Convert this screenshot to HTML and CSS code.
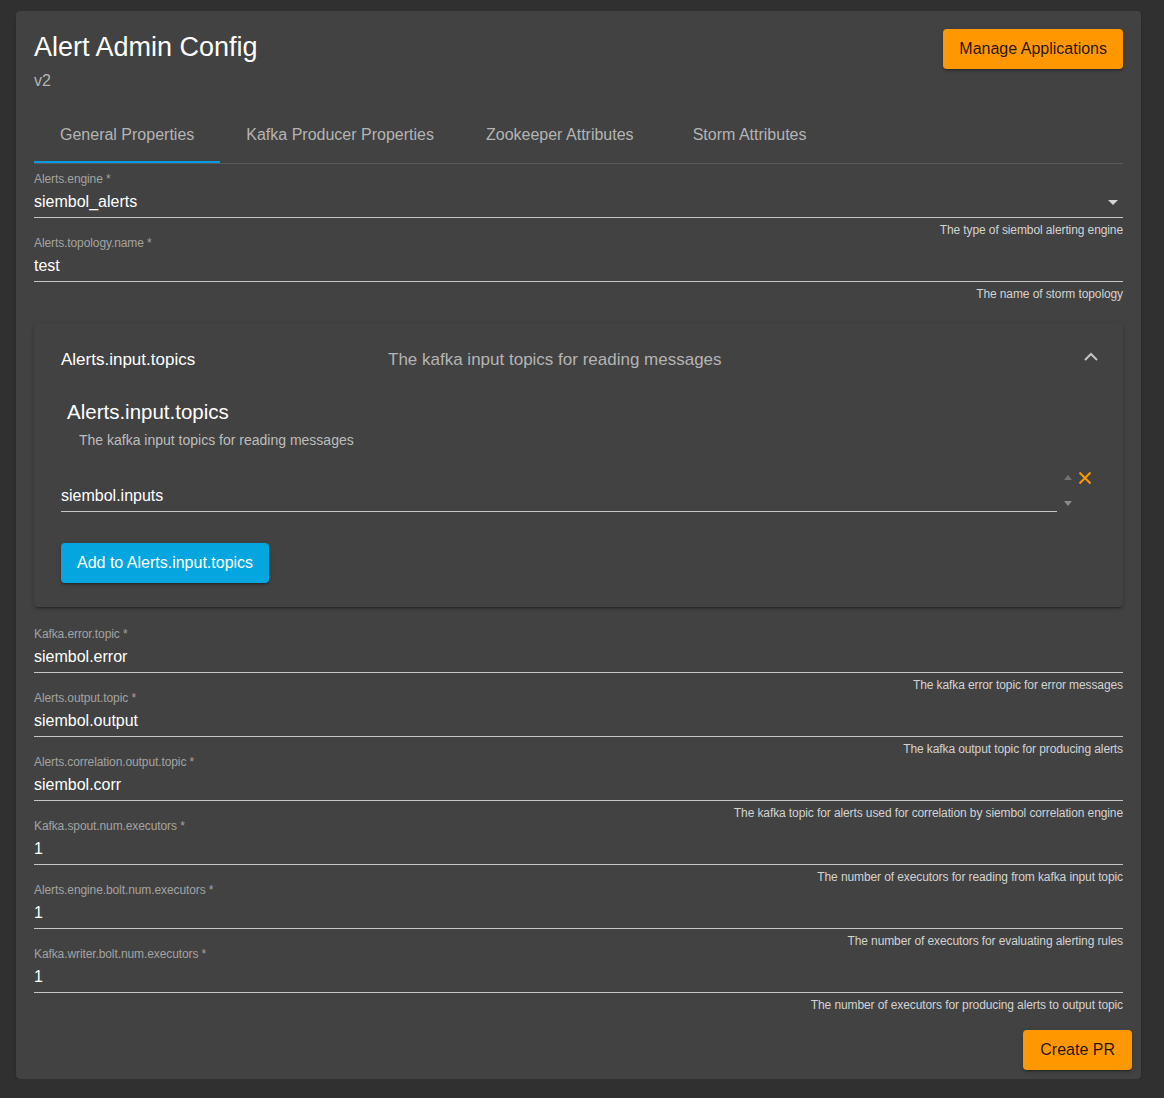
FILE: index.html
```html
<!DOCTYPE html>
<html lang="en">
<head>
<meta charset="utf-8">
<title>Alert Admin Config</title>
<link rel="stylesheet" href="styles.css">
</head>
<body>
<div class="card">
  <div class="card-header">
    <div class="heading">
      <div class="title">Alert Admin Config</div>
      <div class="subtitle">v2</div>
    </div>
    <button class="btn btn-orange">Manage Applications</button>
  </div>

  <div class="tabs">
    <div class="tab active">General Properties</div>
    <div class="tab">Kafka Producer Properties</div>
    <div class="tab">Zookeeper Attributes</div>
    <div class="tab">Storm Attributes</div>
  </div>

  <div class="form">
    <div class="field field-first">
      <div class="field-label">Alerts.engine *</div>
      <div class="field-control">
        <span class="field-value">siembol_alerts</span>
        <svg class="select-arrow" width="10" height="5" viewBox="0 0 10 5"><path d="M0 0 L10 0 L5 5 Z" fill="#d4d4d4"/></svg>
      </div>
      <div class="field-hint">The type of siembol alerting engine</div>
    </div>
    <div class="field">
      <div class="field-label">Alerts.topology.name *</div>
      <div class="field-control"><span class="field-value">test</span></div>
      <div class="field-hint">The name of storm topology</div>
    </div>

    <div class="panel">
      <div class="panel-header">
        <div class="panel-title">Alerts.input.topics</div>
        <div class="panel-desc">The kafka input topics for reading messages</div>
        <svg class="chevron" width="14" height="9" viewBox="0 0 14 9"><path d="M1 8 L7 2 L13 8" fill="none" stroke="#c4c4c4" stroke-width="2"/></svg>
      </div>
      <div class="panel-body">
        <div class="array-title">Alerts.input.topics</div>
        <div class="array-desc">The kafka input topics for reading messages</div>
        <div class="array-item">
          <div class="array-field">siembol.inputs</div>
          <div class="reorder">
            <svg class="up" width="8" height="5" viewBox="0 0 8 5"><path d="M0 5 L8 5 L4 0 Z" fill="#737373"/></svg>
            <svg class="down" width="8" height="5" viewBox="0 0 8 5"><path d="M0 0 L8 0 L4 5 Z" fill="#8a8a8a"/></svg>
          </div>
          <svg class="remove" width="14" height="14" viewBox="0 0 14 14"><path d="M1.5 1.5 L12.5 12.5 M12.5 1.5 L1.5 12.5" stroke="#ff9800" stroke-width="2" fill="none"/></svg>
        </div>
        <button class="btn btn-blue">Add to Alerts.input.topics</button>
      </div>
    </div>

    <div class="field field-after-panel">
      <div class="field-label">Kafka.error.topic *</div>
      <div class="field-control"><span class="field-value">siembol.error</span></div>
      <div class="field-hint">The kafka error topic for error messages</div>
    </div>
    <div class="field">
      <div class="field-label">Alerts.output.topic *</div>
      <div class="field-control"><span class="field-value">siembol.output</span></div>
      <div class="field-hint">The kafka output topic for producing alerts</div>
    </div>
    <div class="field">
      <div class="field-label">Alerts.correlation.output.topic *</div>
      <div class="field-control"><span class="field-value">siembol.corr</span></div>
      <div class="field-hint">The kafka topic for alerts used for correlation by siembol correlation engine</div>
    </div>
    <div class="field">
      <div class="field-label">Kafka.spout.num.executors *</div>
      <div class="field-control"><span class="field-value">1</span></div>
      <div class="field-hint">The number of executors for reading from kafka input topic</div>
    </div>
    <div class="field">
      <div class="field-label">Alerts.engine.bolt.num.executors *</div>
      <div class="field-control"><span class="field-value">1</span></div>
      <div class="field-hint">The number of executors for evaluating alerting rules</div>
    </div>
    <div class="field">
      <div class="field-label">Kafka.writer.bolt.num.executors *</div>
      <div class="field-control"><span class="field-value">1</span></div>
      <div class="field-hint">The number of executors for producing alerts to output topic</div>
    </div>
  </div>

  <div class="card-actions">
    <button class="btn btn-orange btn-pr">Create PR</button>
  </div>
</div>
</body>
</html>
```

FILE: styles.css
```css
html, body {
  margin: 0;
  padding: 0;
}

body {
  background: #303030;
  font-family: "Liberation Sans", Arial, sans-serif;
  color: #ffffff;
}

.card {
  width: 1125px;
  box-sizing: border-box;
  margin: 11px 0 0 16px;
  padding: 18px 18px 9px 18px;
  background: #424242;
  border-radius: 4px;
  box-shadow: 0 2px 1px -1px rgba(0,0,0,.2), 0 1px 1px 0 rgba(0,0,0,.14), 0 1px 3px 0 rgba(0,0,0,.12);
}

.card-header {
  display: flex;
  justify-content: space-between;
  align-items: flex-start;
}

.title {
  margin-top: 2px;
  font-size: 27px;
  line-height: 32px;
  color: #ffffff;
}

.subtitle {
  margin-top: 8px;
  font-size: 16px;
  line-height: 20px;
  color: #b4b4b4;
}

.btn {
  height: 40px;
  padding: 0 16px;
  border: 0;
  border-radius: 4px;
  font-family: "Liberation Sans", Arial, sans-serif;
  font-size: 16px;
  cursor: pointer;
  box-shadow: 0 3px 1px -2px rgba(0,0,0,.2), 0 2px 2px 0 rgba(0,0,0,.14), 0 1px 5px 0 rgba(0,0,0,.12);
}

.btn-pr {
  padding: 0 17px;
}

.btn-orange {
  background: #ff9800;
  color: rgba(0,0,0,.87);
}

.btn-blue {
  background: #03a6df;
  color: #ffffff;
}

.tabs {
  display: flex;
  margin-top: 22px;
  border-bottom: 1px solid rgba(255,255,255,.12);
}

.tab {
  box-sizing: border-box;
  height: 50px;
  min-width: 180px;
  padding: 0 26px 4px 26px;
  border-bottom: 2px solid transparent;
  display: flex;
  align-items: center;
  justify-content: center;
  font-size: 16px;
  color: #b4b4b4;
  white-space: nowrap;
}

.tab.active {
  border-bottom-color: #039be5;
}

.form {
  display: flex;
  flex-direction: column;
}

.field {
  display: flex;
  flex-direction: column;
  height: 64px;
}

.field-first {
  margin-top: 8px;
}

.field-after-panel {
  margin-top: 20px;
}

.field-label {
  font-size: 12px;
  line-height: 14px;
  height: 14px;
  color: #a2a2a2;
  letter-spacing: -0.1px;
  white-space: nowrap;
}

.field-control {
  box-sizing: border-box;
  margin-top: 5px;
  height: 27px;
  padding-top: 1px;
  padding-bottom: 5px;
  border-bottom: 1px solid #c6c6c6;
  display: flex;
  align-items: center;
  justify-content: space-between;
}

.field-value {
  font-size: 16px;
  line-height: 20px;
  color: #ffffff;
}

.select-arrow {
  margin-right: 5px;
}

.field-hint {
  margin-top: 5px;
  padding-top: 1px;
  height: 13px;
  font-size: 12px;
  line-height: 13px;
  text-align: right;
  color: #d2d2d2;
  letter-spacing: -0.1px;
  white-space: nowrap;
}

.panel {
  margin-top: 23px;
  background: #424242;
  border-radius: 4px;
  box-shadow: 0 3px 1px -2px rgba(0,0,0,.2), 0 2px 2px 0 rgba(0,0,0,.14), 0 1px 5px 0 rgba(0,0,0,.12);
}

.panel-header {
  box-sizing: border-box;
  height: 70px;
  padding: 3px 25px 0 27px;
  display: flex;
  align-items: center;
  font-size: 17px;
}

.panel-title {
  flex: 0 0 311px;
  margin-right: 16px;
  color: #ffffff;
}

.panel-desc {
  flex: 1;
  color: #b4b4b4;
}

.chevron {
  display: block;
  margin-bottom: 7px;
}

.panel-body {
  padding: 7px 27px 24px 27px;
  display: flex;
  flex-direction: column;
  align-items: flex-start;
}

.array-title {
  margin-left: 6px;
  font-size: 20.5px;
  line-height: 24px;
  color: #ffffff;
}

.array-desc {
  margin-top: 8px;
  margin-left: 18px;
  font-size: 14px;
  line-height: 16px;
  color: #bdbdbd;
}

.array-item {
  align-self: stretch;
  margin-top: 18px;
  display: flex;
  align-items: flex-start;
}

.array-field {
  flex: 1;
  box-sizing: border-box;
  height: 46px;
  padding-top: 20px;
  padding-bottom: 5px;
  border-bottom: 1px solid #c6c6c6;
  font-size: 16px;
  line-height: 20px;
  color: #ffffff;
}

.reorder {
  width: 16px;
  height: 46px;
  margin-left: 3px;
  display: flex;
  flex-direction: column;
  align-items: center;
}

.reorder .up {
  margin-top: 9px;
}

.reorder .down {
  margin-top: 21px;
}

.remove {
  margin-top: 5px;
  margin-left: 2px;
  margin-right: 4px;
}

.panel-body .btn {
  margin-top: 31px;
}

.card-actions {
  display: flex;
  justify-content: flex-end;
  margin: 19px -9px 0 0;
}
```
